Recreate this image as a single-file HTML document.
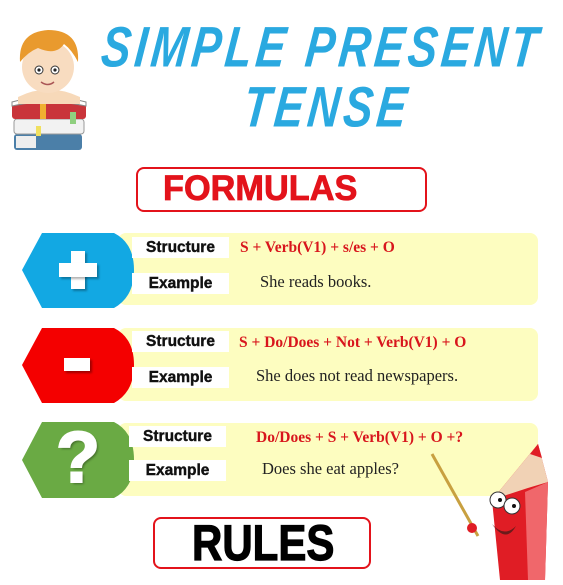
<!DOCTYPE html>
<html><head><meta charset="utf-8"><style>
*{margin:0;padding:0;box-sizing:border-box}
body{width:563px;height:585px;background:#fff;position:relative;overflow:hidden;font-family:"Liberation Sans",sans-serif}
.abs{position:absolute}
.title{color:#2aa9e0;font-style:italic;font-weight:bold;font-family:"Liberation Sans",sans-serif;letter-spacing:4px;white-space:nowrap;transform-origin:0 0;transform:skewX(-6deg) scaleY(1.3)}
.box{border:2px solid #e3131b;border-radius:8px}
.bt{position:absolute;font-weight:bold;white-space:nowrap;transform-origin:0 0}
.yel{background:#fdfdc0;border-radius:8px}
.lbl{background:#fff;font-weight:bold;font-size:15.5px;color:#111;text-align:center;width:97px;height:21px;line-height:21px;-webkit-text-stroke:0.4px #111}
.f{color:#d8161d;font-weight:bold;font-family:"Liberation Serif",serif;font-size:15.5px;white-space:nowrap}
.e{color:#222;font-family:"Liberation Serif",serif;font-size:16.5px;white-space:nowrap}
.sym{color:#fff;font-weight:bold;text-align:center;text-shadow:2px 2px 2px rgba(0,0,0,.35)}
</style></head><body>

<svg class="abs" style="left:8px;top:22px" width="82" height="132" viewBox="0 0 82 132">
<rect x="6" y="112" width="68" height="16" rx="3" fill="#4b7fa8"/>
<rect x="8" y="114" width="20" height="12" fill="#eee"/>
<rect x="6" y="97" width="70" height="15" rx="3" fill="#f2f2f2" stroke="#999"/>
<rect x="4" y="82" width="74" height="15" rx="3" fill="#c9343a"/>
<rect x="32" y="82" width="6" height="15" fill="#f0b030"/>
<rect x="62" y="90" width="6" height="12" fill="#8fcf7f"/>
<rect x="28" y="104" width="5" height="10" fill="#f0e060"/>
<path d="M4 80 Q40 70 78 80 L78 84 Q40 76 4 84Z" fill="#fff" stroke="#888"/>
<path d="M10 75 Q40 60 72 75 L72 82 L10 82Z" fill="#f7d9b9"/>
<ellipse cx="40" cy="45" rx="26" ry="26" fill="#f8dcc0"/>
<path d="M12 40 Q10 10 40 8 Q72 8 70 40 Q64 28 56 22 Q48 34 30 26 Q20 30 12 40Z" fill="#e99a2e"/>
<circle cx="31" cy="48" r="4" fill="#fff" stroke="#333"/><circle cx="47" cy="48" r="4" fill="#fff" stroke="#333"/>
<circle cx="31" cy="48" r="1.6" fill="#222"/><circle cx="47" cy="48" r="1.6" fill="#222"/>
<path d="M33 60 Q40 65 46 60" stroke="#a55" fill="none" stroke-width="1.5"/>
</svg>

<div class="abs title" style="left:104px;top:26px;font-size:44px;line-height:34px">SIMPLE PRESENT</div>
<div class="abs title" style="left:246px;top:86px;font-size:44px;line-height:34px">TENSE</div>

<div class="abs box" style="left:136px;top:167px;width:291px;height:45px"></div>
<div class="bt" style="left:163px;top:170px;font-size:35px;line-height:38px;color:#e3131b;-webkit-text-stroke:0.8px #e3131b;transform:scaleX(0.98)">FORMULAS</div>

<div class="abs yel" style="left:118px;top:233px;width:420px;height:72px"></div>
<svg class="abs" style="left:22px;top:233px" width="112" height="75"><path d="M0 37 L20 0 L92 0 Q112 10 112 37 Q112 64 92 75 L20 75Z" fill="#12a8e3"/></svg>
<div class="abs" style="left:71px;top:251px;width:14px;height:38px;background:#fff;box-shadow:2px 2px 2px rgba(0,0,0,.3)"></div>
<div class="abs" style="left:59px;top:263px;width:38px;height:14px;background:#fff;box-shadow:2px 2px 2px rgba(0,0,0,.3)"></div>
<div class="abs lbl" style="left:132px;top:237px">Structure</div>
<div class="abs f" style="left:240px;top:239px">S + Verb(V1) + s/es + O</div>
<div class="abs lbl" style="left:132px;top:273px">Example</div>
<div class="abs e" style="left:260px;top:272px">She reads books.</div>

<div class="abs yel" style="left:118px;top:328px;width:420px;height:73px"></div>
<svg class="abs" style="left:22px;top:328px" width="112" height="75"><path d="M0 37 L20 0 L92 0 Q112 10 112 37 Q112 64 92 75 L20 75Z" fill="#f40000"/></svg>
<div class="abs" style="left:64px;top:358px;width:26px;height:13px;background:#fff;box-shadow:2px 2px 2px rgba(0,0,0,.35)"></div>
<div class="abs lbl" style="left:132px;top:331px">Structure</div>
<div class="abs f" style="left:239px;top:334px">S + Do/Does + Not + Verb(V1) + O</div>
<div class="abs lbl" style="left:132px;top:367px">Example</div>
<div class="abs e" style="left:256px;top:366px">She does not read newspapers.</div>

<div class="abs yel" style="left:118px;top:423px;width:420px;height:73px"></div>
<svg class="abs" style="left:22px;top:422px" width="112" height="76"><path d="M0 38 L20 0 L92 0 Q112 10 112 38 Q112 66 92 76 L20 76Z" fill="#6aaa44"/></svg>
<div class="abs sym" style="left:38px;top:418px;width:80px;font-size:72px;line-height:80px;-webkit-text-stroke:2px #fff">?</div>
<div class="abs lbl" style="left:129px;top:426px">Structure</div>
<div class="abs f" style="left:256px;top:429px">Do/Does + S + Verb(V1) + O +?</div>
<div class="abs lbl" style="left:129px;top:460px">Example</div>
<div class="abs e" style="left:262px;top:459px">Does she eat apples?</div>

<div class="abs box" style="left:153px;top:517px;width:218px;height:52px"></div>
<div class="bt" style="left:192px;top:515px;font-size:50px;line-height:56px;color:#000;-webkit-text-stroke:1.2px #000;transform:scaleX(0.84)">RULES</div>

<svg class="abs" style="left:420px;top:430px" width="143" height="155" viewBox="0 0 143 155">
<line x1="12" y1="24" x2="58" y2="106" stroke="#c8a040" stroke-width="3"/>
<path d="M72 70 L118 14 L128 52 L125 150 L80 150Z" fill="#e01d25"/>
<path d="M72 70 L118 14 L128 52 Q100 60 72 70Z" fill="#f1d2b5"/>
<path d="M110 24 L118 14 L122 28Z" fill="#e01d25"/>
<path d="M105 62 L128 52 L125 150 L108 150Z" fill="#f0676b"/>
<circle cx="78" cy="70" r="8" fill="#fff" stroke="#333"/><circle cx="92" cy="76" r="8" fill="#fff" stroke="#333"/>
<circle cx="80" cy="70" r="2" fill="#111"/><circle cx="94" cy="76" r="2" fill="#111"/>
<path d="M72 94 Q84 108 96 96 Q86 114 72 94Z" fill="#6b1b1b"/>
<circle cx="52" cy="98" r="5" fill="#e01d25"/>
</svg>
</body></html>
